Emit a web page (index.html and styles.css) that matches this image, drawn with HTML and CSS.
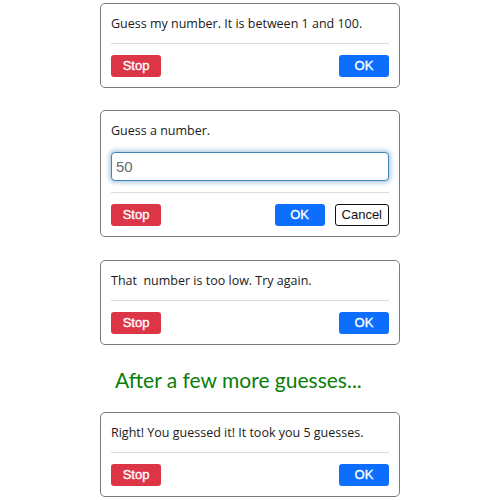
FILE: index.html
```html
<!DOCTYPE html>
<html lang="en">
<head>
<meta charset="utf-8">
<title>Guess my number</title>
<link rel="stylesheet" href="styles.css">
</head>
<body>
<main class="page">
  <section class="dialog">
    <p class="msg">Guess my number. It is between 1 and 100.</p>
    <hr class="divider">
    <div class="actions">
      <button class="btn btn-stop">Stop</button>
      <span class="spacer"></span>
      <button class="btn btn-ok">OK</button>
    </div>
  </section>

  <section class="dialog dialog-prompt">
    <p class="msg">Guess a number.</p>
    <input class="prompt-input" type="text" value="50">
    <hr class="divider">
    <div class="actions">
      <button class="btn btn-stop">Stop</button>
      <span class="spacer"></span>
      <button class="btn btn-ok">OK</button>
      <button class="btn btn-cancel">Cancel</button>
    </div>
  </section>

  <section class="dialog dialog-third">
    <p class="msg">That&nbsp; number is too low. Try again.</p>
    <hr class="divider">
    <div class="actions">
      <button class="btn btn-stop">Stop</button>
      <span class="spacer"></span>
      <button class="btn btn-ok">OK</button>
    </div>
  </section>

  <h2 class="note">After a few more guesses...</h2>

  <section class="dialog">
    <p class="msg">Right! You guessed it! It took you 5 guesses.</p>
    <hr class="divider">
    <div class="actions">
      <button class="btn btn-stop">Stop</button>
      <span class="spacer"></span>
      <button class="btn btn-ok">OK</button>
    </div>
  </section>
</main>
</body>
</html>
```

FILE: styles.css
```css
html, body {
  margin: 0;
  padding: 0;
  background: #ffffff;
}

.page {
  width: 300px;
  margin: 0 auto;
  padding-top: 3px;
  display: flex;
  flex-direction: column;
}

.dialog {
  box-sizing: border-box;
  width: 300px;
  border: 1px solid #7a7a7a;
  border-radius: 5px;
  padding: 10px;
  background: #fff;
}

.dialog-prompt {
  margin-top: 22px;
}

.dialog-third {
  margin-top: 23px;
}

.msg {
  margin: 0;
  font-family: "Open Sans", "Noto Sans", sans-serif;
  font-size: 12.5px;
  line-height: 20px;
  color: #1a1a1a;
}

.divider {
  margin: 9px 0 11px;
  border: 0;
  border-top: 1px solid #dcdcdc;
  height: 0;
}

.prompt-input {
  display: block;
  box-sizing: border-box;
  width: 100%;
  height: 29px;
  margin: 11px 0 0;
  padding: 0 4px;
  border: 1.5px solid #3f86b8;
  border-radius: 4px;
  box-shadow: 0 0 4px 2px rgba(79, 143, 192, 0.45);
  font-family: "Liberation Sans", Arial, sans-serif;
  font-size: 15px;
  color: #6b6b6b;
  outline: none;
}

.dialog-prompt .divider {
  margin-top: 11px;
}

.actions {
  display: flex;
  align-items: center;
  gap: 10px;
}

.spacer {
  flex: 1;
}

.btn {
  box-sizing: border-box;
  min-width: 50px;
  height: 22px;
  padding: 0 6px;
  border: 1px solid transparent;
  border-radius: 3px;
  font-family: "Liberation Sans", Arial, sans-serif;
  font-size: 13px;
  line-height: 20px;
  cursor: pointer;
}

.btn-stop {
  background: #dc3545;
  color: #fff;
  -webkit-text-stroke: 0.35px #fff;
}

.btn-ok {
  background: #0d6efd;
  color: #fff;
  -webkit-text-stroke: 0.35px #fff;
}

.btn-cancel {
  background: #fff;
  color: #111;
  border-color: #111;
}

.note {
  margin: 0;
  height: 67px;
  display: flex;
  align-items: center;
  padding-left: 15px;
  padding-top: 2px;
  box-sizing: border-box;
  font-family: Lato, "Open Sans", sans-serif;
  font-weight: normal;
  font-size: 21px;
  color: #0a7d0a;
}
```
